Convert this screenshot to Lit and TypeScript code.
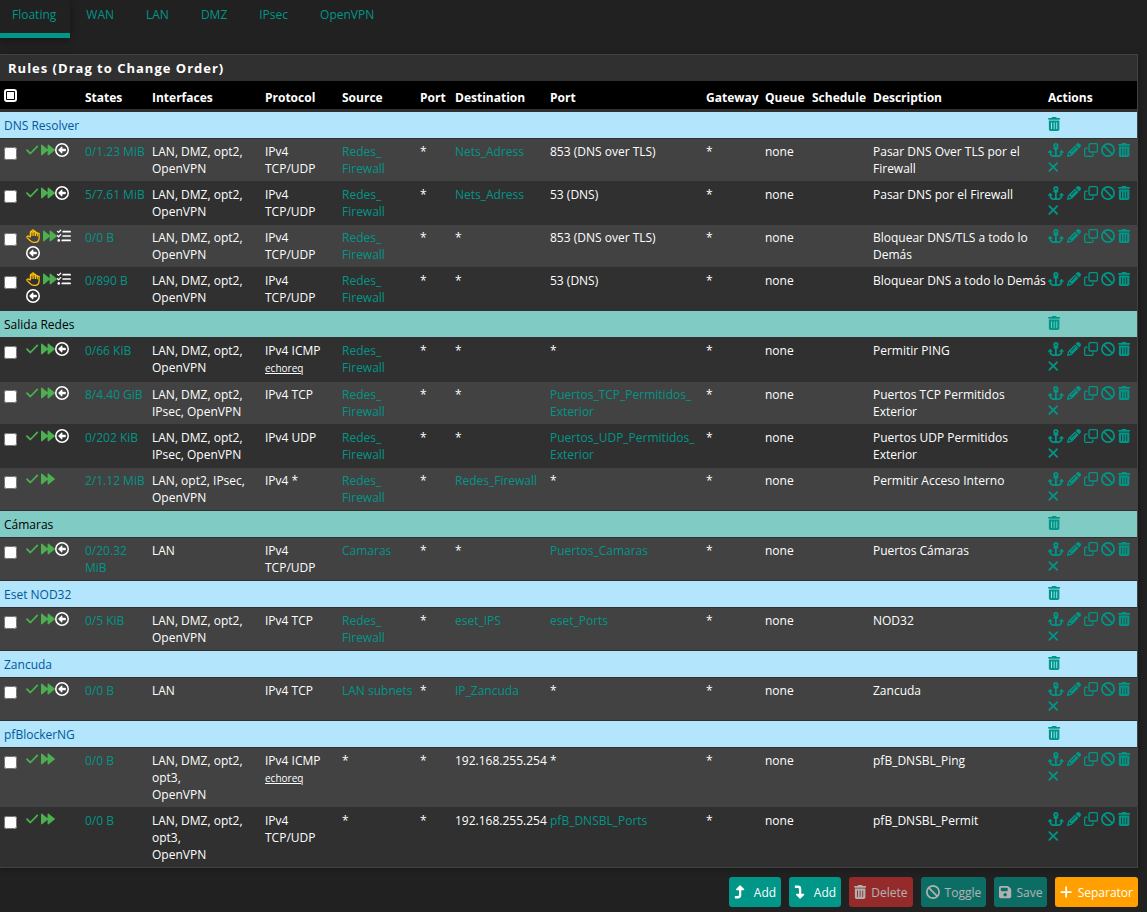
import { LitElement, html, css, svg, nothing } from "lit";
import { customElement, property } from "lit/decorators.js";

interface Rule {
  kind: "rule";
  block?: boolean;
  floating?: boolean;
  states: string;
  interfaces: string;
  protocol: string;
  icmp?: string;
  source: string;
  destination: string;
  port: string;
  description: string;
}

interface Separator {
  kind: "separator";
  tone: "info" | "teal";
  title: string;
}

const ICONS: Record<string, { w: number; body: unknown }> = {
  check: {
    w: 448,
    body: svg`<path d="M34 262L160 384L414 124" fill="none" stroke="currentColor" stroke-width="64" stroke-linecap="round" stroke-linejoin="round"/>`,
  },
  forward: {
    w: 512,
    body: svg`<path d="M0 84c0-22 24-34 42-20L240 226V84c0-22 24-34 42-20L500 236c12 11 12 29 0 40L282 448c-18 14-42 2-42-20V286L42 448c-18 14-42 2-42-20z"/>`,
  },
  circleLeft: {
    w: 512,
    body: svg`<circle cx="256" cy="256" r="228" fill="none" stroke="currentColor" stroke-width="56"/><path d="M112 256L244 130c10-10 26-3 26 12v66h104c13 0 22 9 22 22v52c0 13-9 22-22 22H270v66c0 15-16 22-26 12z"/>`,
  },
  hand: {
    w: 512,
    body: svg`<path d="M160 290V120c0-42 62-42 62 0V64c0-44 64-44 64 0v44c0-42 62-42 62 0v50c0-42 62-42 62 0c0-4 0 0 70 6v154c0 100-64 170-160 170h-36c-60 0-104-24-138-68L40 316c-28-42 26-84 60-48z" fill="none" stroke="currentColor" stroke-width="46" stroke-linejoin="round"/><path d="M222 110v130M286 80v160M348 110v130M414 150v100" fill="none" stroke="currentColor" stroke-width="40" stroke-linecap="round"/>`,
  },
  listCheck: {
    w: 512,
    body: svg`<path d="M16 86l42 38L134 44M16 246l42 38L134 204" fill="none" stroke="currentColor" stroke-width="46" stroke-linecap="round" stroke-linejoin="round"/><path d="M224 96H480M224 256H480M192 416H480" fill="none" stroke="currentColor" stroke-width="62" stroke-linecap="round"/><circle cx="64" cy="416" r="46"/>`,
  },
  anchor: {
    w: 576,
    body: svg`<path d="M320 96a32 32 0 1 1-64 0 32 32 0 1 1 64 0zm21.100 80C367 158.800 384 129.400 384 96c0-53-43-96-96-96s-96 43-96 96c0 33.400 17 62.800 42.900 80H224c-17.700 0-32 14.300-32 32s14.300 32 32 32h32V448H208c-53 0-96-43-96-96v-6.100l7 7c9.400 9.400 24.600 9.400 33.900 0s9.400-24.600 0-33.900L97 263c-9.400-9.400-24.600-9.400-33.900 0L7 319c-9.400 9.400-9.400 24.600 0 33.900s24.600 9.400 33.900 0l7-7V352c0 88.400 71.600 160 160 160h80 80c88.400 0 160-71.600 160-160v-6.100l7 7c9.400 9.400 24.600 9.400 33.900 0s9.400-24.600 0-33.900L513 263c-9.400-9.400-24.600-9.400-33.900 0l-56 56c-9.400 9.400-9.400 24.600 0 33.900s24.600 9.400 33.900 0l7-7V352c0 53-43 96-96 96H320V240h32c17.700 0 32-14.300 32-32s-14.300-32-32-32H341.100z"/>`,
  },
  pencil: {
    w: 512,
    body: svg`<path fill-rule="evenodd" d="M410.300 231l11.300-11.300-33.900-33.900-62.100-62.100L291.700 89.800l-11.300 11.300-22.600 22.600L58.600 322.900c-10.400 10.400-18 23.300-22.200 37.400L1 480.700c-2.500 8.400-.2 17.500 6.100 23.700s15.300 8.500 23.700 6.100l120.300-35.400c14.100-4.200 27-11.800 37.400-22.200L387.700 253.700 410.300 231zM160 399.400l-9.100 22.700c-4 3.100-8.500 5.400-13.300 6.900L59.400 452l23-78.100c1.400-4.900 3.800-9.400 6.900-13.300l22.700-9.100v32c0 8.800 7.200 16 16 16h32zM362.700 18.700L348.300 33.200 325.700 55.800 314.300 67.100l33.900 33.900 62.100 62.100 33.900 33.900 11.300-11.300 22.600-22.600 14.500-14.500c25-25 25-65.500 0-90.500L453.300 18.700c-25-25-65.500-25-90.500 0zm-47.400 168l-144 144c-6.200 6.200-16.400 6.200-22.600 0s-6.200-16.400 0-22.600l144-144c6.200-6.200 16.400-6.200 22.600 0s6.200 16.400 0 22.600z"/>`,
  },
  clone: {
    w: 512,
    body: svg`<g fill="none" stroke="currentColor" stroke-width="48" stroke-linejoin="round"><rect x="184" y="24" width="304" height="304" rx="40"/><path d="M128 184H64c-22 0-40 18-40 40V448c0 22 18 40 40 40H288c22 0 40-18 40-40V384" stroke-linecap="butt"/></g>`,
  },
  ban: {
    w: 512,
    body: svg`<g fill="none" stroke="currentColor" stroke-width="62"><circle cx="256" cy="256" r="224"/><path d="M98 98L414 414"/></g>`,
  },
  trash: {
    w: 448,
    body: svg`<path fill-rule="evenodd" d="M135.200 17.700L128 32H32C14.300 32 0 46.300 0 64S14.300 96 32 96H416c17.700 0 32-14.300 32-32s-14.300-32-32-32H320l-7.200-14.300C307.400 6.800 296.300 0 284.200 0H163.800c-12.100 0-23.200 6.800-28.600 17.700zM416 128H32V448c0 35.300 28.700 64 64 64H352c35.300 0 64-28.700 64-64V128zM144 208V432c0 8.800-7.200 16-16 16s-16-7.200-16-16V208c0-8.800 7.200-16 16-16s16 7.200 16 16zm96 0V432c0 8.800-7.200 16-16 16s-16-7.200-16-16V208c0-8.800 7.200-16 16-16s16 7.200 16 16zm96 0V432c0 8.800-7.200 16-16 16s-16-7.200-16-16V208c0-8.800 7.200-16 16-16s16 7.200 16 16z"/>`,
  },
  xmark: {
    w: 384,
    body: svg`<path d="M48 112L336 400M336 112L48 400" fill="none" stroke="currentColor" stroke-width="64" stroke-linecap="round"/>`,
  },
  turnUp: {
    w: 384,
    body: svg`<path d="M32 448H144c44 0 80-36 80-80V176" fill="none" stroke="currentColor" stroke-width="84" stroke-linejoin="round"/><path d="M207 14c10-10 24-10 34 0L370 150c14 15 4 42-18 42H96c-22 0-32-27-18-42z"/>`,
  },
  turnDown: {
    w: 384,
    body: svg`<path d="M32 64H144c44 0 80 36 80 80V336" fill="none" stroke="currentColor" stroke-width="84" stroke-linejoin="round"/><path d="M207 498c10 10 24 10 34 0L370 362c14-15 4-42-18-42H96c-22 0-32 27-18 42z"/>`,
  },
  save: {
    w: 448,
    body: svg`<path fill-rule="evenodd" d="M64 32C28.700 32 0 60.700 0 96V416c0 35.300 28.700 64 64 64H384c35.300 0 64-28.700 64-64V173.300c0-17-6.700-33.300-18.700-45.300L352 50.700C340 38.700 323.700 32 306.700 32H64zm0 96c0-17.700 14.300-32 32-32H288c17.700 0 32 14.300 32 32v64c0 17.700-14.300 32-32 32H96c-17.700 0-32-14.300-32-32V128zM224 288a64 64 0 1 1 0 128 64 64 0 1 1 0-128z"/>`,
  },
  plus: {
    w: 448,
    body: svg`<path d="M224 80V432M48 256H400" fill="none" stroke="currentColor" stroke-width="64" stroke-linecap="round"/>`,
  },
};

@customElement("fw-icon")
class FwIcon extends LitElement {
  @property() name = "";

  static styles = css`
    :host {
      display: inline-flex;
      flex: none;
    }
    .glyph {
      display: block;
      height: 14px;
      fill: currentColor;
      overflow: visible;
    }
  `;

  render() {
    const icon = ICONS[this.name];
    if (!icon) return nothing;
    return html`<svg class="glyph" viewBox="0 0 ${icon.w} 512" aria-hidden="true">${icon.body}</svg>`;
  }
}

const LAN3 = "LAN, DMZ, opt2,\nOpenVPN";
const LAN4 = "LAN, DMZ, opt2,\nIPsec, OpenVPN";
const LAN5 = "LAN, DMZ, opt2,\nopt3,\nOpenVPN";
const TCPUDP = "IPv4\nTCP/UDP";
const FW = "@Redes_\nFirewall";

const rule = (
  states: string,
  interfaces: string,
  protocol: string,
  source: string,
  destination: string,
  port: string,
  description: string,
  extra: Partial<Rule> = {},
): Rule => ({
  kind: "rule",
  floating: true,
  states,
  interfaces,
  protocol,
  source,
  destination,
  port,
  description,
  ...extra,
});

const sep = (title: string, tone: "info" | "teal"): Separator => ({ kind: "separator", title, tone });

/* A leading "@" marks the name of an alias, which is shown as a link. */
const ROWS: (Rule | Separator)[] = [
  sep("DNS Resolver", "info"),
  rule("0/1.23 MiB", LAN3, TCPUDP, FW, "@Nets_Adress", "853 (DNS over TLS)", "Pasar DNS Over TLS por el\nFirewall"),
  rule("5/7.61 MiB", LAN3, TCPUDP, FW, "@Nets_Adress", "53 (DNS)", "Pasar DNS por el Firewall"),
  rule("0/0 B", LAN3, TCPUDP, FW, "*", "853 (DNS over TLS)", "Bloquear DNS/TLS a todo lo\nDemás", { block: true }),
  rule("0/890 B", LAN3, TCPUDP, FW, "*", "53 (DNS)", "Bloquear DNS a todo lo Demás", { block: true }),
  sep("Salida Redes", "teal"),
  rule("0/66 KiB", LAN3, "IPv4 ICMP", FW, "*", "*", "Permitir PING", { icmp: "echoreq" }),
  rule("8/4.40 GiB", LAN4, "IPv4 TCP", FW, "*", "@Puertos_TCP_Permitidos_\nExterior", "Puertos TCP Permitidos\nExterior"),
  rule("0/202 KiB", LAN4, "IPv4 UDP", FW, "*", "@Puertos_UDP_Permitidos_\nExterior", "Puertos UDP Permitidos\nExterior"),
  rule("2/1.12 MiB", "LAN, opt2, IPsec,\nOpenVPN", "IPv4 *", FW, "@Redes_Firewall", "*", "Permitir Acceso Interno", { floating: false }),
  sep("Cámaras", "teal"),
  rule("0/20.32\nMiB", "LAN", TCPUDP, "@Camaras", "*", "@Puertos_Camaras", "Puertos Cámaras"),
  sep("Eset NOD32", "info"),
  rule("0/5 KiB", LAN3, "IPv4 TCP", FW, "@eset_IPS", "@eset_Ports", "NOD32"),
  sep("Zancuda", "info"),
  rule("0/0 B", "LAN", "IPv4 TCP", "@LAN subnets", "@IP_Zancuda", "*", "Zancuda"),
  sep("pfBlockerNG", "info"),
  rule("0/0 B", LAN5, "IPv4 ICMP", "*", "192.168.255.254", "*", "pfB_DNSBL_Ping", { icmp: "echoreq", floating: false }),
  rule("0/0 B", LAN5, TCPUDP, "*", "192.168.255.254", "@pfB_DNSBL_Ports", "pfB_DNSBL_Permit", { floating: false }),
];

const COLUMNS: [string, string][] = [
  ["States", "states"],
  ["Interfaces", "interfaces"],
  ["Protocol", "protocol"],
  ["Source", "source"],
  ["Port", "sport"],
  ["Destination", "dest"],
  ["Port", "dport"],
  ["Gateway", "gateway"],
  ["Queue", "queue"],
  ["Schedule", "schedule"],
  ["Description", "description"],
  ["Actions", "actions"],
];

const TABS = ["Floating", "WAN", "LAN", "DMZ", "IPsec", "OpenVPN"];

const BUTTONS = [
  { label: "Add", icon: "turnUp", tone: "primary", off: false },
  { label: "Add", icon: "turnDown", tone: "primary", off: false },
  { label: "Delete", icon: "trash", tone: "danger", off: true },
  { label: "Toggle", icon: "ban", tone: "primary", off: true },
  { label: "Save", icon: "save", tone: "primary", off: true },
  { label: "Separator", icon: "plus", tone: "warning", off: false },
];

@customElement("app-root")
class AppRoot extends LitElement {
  static styles = css`
    :host {
      display: block;
      box-sizing: border-box;
      min-height: 100vh;
      padding: 0 9px 6px 0;
      background: #212121;
      color: #fff;
      font-family: "Segoe UI", "Open Sans", "Noto Sans", sans-serif;
      font-size: 12px;
      line-height: 17px;
    }
    a {
      color: #009688;
      text-decoration: none;
    }
    .tabs {
      display: flex;
      height: 38px;
    }
    .tab {
      box-sizing: border-box;
      padding: 6px 16px 0;
    }
    .tab.active {
      padding: 6px 14px 0 12px;
      border-bottom: 5px solid #009688;
      box-shadow: 0 2px 8px rgba(0, 0, 0, 0.4);
    }
    .panel {
      margin-top: 16px;
      border: 1px solid #424242;
      border-left: 0;
      background: #303030;
      box-shadow: 0 1px 6px rgba(0, 0, 0, 0.3);
    }
    .title {
      margin: 0;
      padding: 4px 8px;
      font-size: 13px;
      line-height: 18px;
      font-weight: 700;
      letter-spacing: 1px;
    }
    .rules {
      width: 100%;
      table-layout: fixed;
      border-collapse: separate;
      border-spacing: 0;
    }
    .col-select { width: 22px; }
    .col-status { width: 59px; }
    .col-states { width: 67px; }
    .col-interfaces { width: 113px; }
    .col-protocol { width: 77px; }
    .col-source { width: 78px; }
    .col-sport { width: 35px; }
    .col-dest { width: 95px; }
    .col-dport { width: 156px; }
    .col-gateway { width: 59px; }
    .col-queue { width: 47px; }
    .col-schedule { width: 61px; }
    .col-actions { width: 93px; }
    th {
      padding: 8px 0 3px 4px;
      background: #000;
      border-bottom: 2px solid #303030;
      text-align: left;
      vertical-align: top;
      font-weight: 700;
      white-space: nowrap;
    }
    td {
      padding: 4px 0 4px 4px;
      border-top: 1px solid transparent;
      background-clip: padding-box;
      vertical-align: top;
      white-space: pre;
    }
    .shade td {
      background-color: #424242;
    }
    .sep td {
      padding-top: 5px;
    }
    .info td {
      background-color: #b3e5fc;
      color: #01579b;
    }
    .teal td {
      background-color: #80cbc4;
      color: #000;
    }
    .box {
      display: block;
      width: 13px;
      height: 13px;
      margin: 4px 0 0;
    }
    .all {
      appearance: none;
      box-sizing: border-box;
      margin: 0;
      border: 2px solid #fff;
      border-radius: 3px;
      background: #fff content-box;
      padding: 1px;
    }
    .status,
    .actions {
      display: flex;
      flex-wrap: wrap;
      white-space: normal;
    }
    .status fw-icon,
    .actions a {
      display: flex;
      height: 17px;
      align-items: flex-start;
    }
    .actions {
      column-gap: 3px;
    }
    .pass,
    .match {
      color: #4caf50;
    }
    .pass,
    .block {
      margin-right: 3px;
    }
    .block {
      color: #ffc107;
    }
    .icmp {
      font-size: 10px;
      text-decoration: underline;
    }
    .bar {
      display: flex;
      flex-wrap: wrap;
      justify-content: flex-end;
      gap: 8px;
      margin-top: 9px;
    }
    .btn {
      display: flex;
      align-items: center;
      justify-content: space-between;
      gap: 5px;
      min-width: 52px;
      height: 30px;
      padding: 0 5px;
      border: 0;
      border-radius: 3px;
      color: #fff;
      font: inherit;
    }
    .primary { background: #009688; }
    .danger { background: #d32f2f; }
    .warning { background: #ffa000; }
    .btn:disabled { opacity: 0.65; }
  `;

  private cell(value: string) {
    return value.startsWith("@") ? html`<a href="#">${value.slice(1)}</a>` : value;
  }

  private action(icon: string, label: string) {
    return html`<a href="#" aria-label=${label}><fw-icon name=${icon}></fw-icon></a>`;
  }

  private separatorRow(s: Separator) {
    return html`<tr class="sep ${s.tone}">
      <td colspan="13">${s.title}</td>
      <td><div class="actions">${this.action("trash", "Delete separator")}</div></td>
    </tr>`;
  }

  private ruleRow(r: Rule, shade: boolean) {
    return html`<tr class=${shade ? "shade" : "plain"}>
      <td><input class="box" type="checkbox" aria-label="Select rule ${r.description}" /></td>
      <td><div class="status">
        <fw-icon class=${r.block ? "block" : "pass"} name=${r.block ? "hand" : "check"}></fw-icon>
        <fw-icon class="match" name="forward"></fw-icon>
        ${r.block ? html`<fw-icon name="listCheck"></fw-icon>` : nothing}
        ${r.floating ? html`<fw-icon name="circleLeft"></fw-icon>` : nothing}
      </div></td>
      <td><a href="#">${r.states}</a></td>
      <td>${r.interfaces}</td>
      <td>${r.protocol}${r.icmp ? html`<br /><span class="icmp">${r.icmp}</span>` : nothing}</td>
      <td>${this.cell(r.source)}</td>
      <td>*</td>
      <td>${this.cell(r.destination)}</td>
      <td>${this.cell(r.port)}</td>
      <td>*</td>
      <td>none</td>
      <td></td>
      <td>${r.description}</td>
      <td><div class="actions">
        ${this.action("anchor", "Move checked rules above this one")}
        ${this.action("pencil", "Edit")}
        ${this.action("clone", "Copy")}
        ${this.action("ban", "Disable")}
        ${this.action("trash", "Delete")}
        ${r.block ? nothing : this.action("xmark", "Kill states")}
      </div></td>
    </tr>`;
  }

  render() {
    return html`
      <nav class="tabs">
        ${TABS.map((t, i) => html`<a class="tab ${i === 0 ? "active" : ""}" href="#">${t}</a>`)}
      </nav>
      <section class="panel">
        <h2 class="title">Rules (Drag to Change Order)</h2>
        <table class="rules">
          <colgroup>
            <col class="col-select" />
            <col class="col-status" />
            ${COLUMNS.map(([, key]) => html`<col class="col-${key}" />`)}
          </colgroup>
          <thead>
            <tr>
              <th><input class="box all" type="checkbox" aria-label="Select all rules" /></th>
              <th></th>
              ${COLUMNS.map(([label]) => html`<th>${label}</th>`)}
            </tr>
          </thead>
          <tbody>
            ${ROWS.map((row, i) =>
              row.kind === "separator" ? this.separatorRow(row) : this.ruleRow(row, i % 2 === 1),
            )}
          </tbody>
        </table>
      </section>
      <div class="bar">
        ${BUTTONS.map(
          (b) => html`<button class="btn ${b.tone}" type="button" ?disabled=${b.off}>
            <fw-icon name=${b.icon}></fw-icon>${b.label}
          </button>`,
        )}
      </div>
    `;
  }
}
